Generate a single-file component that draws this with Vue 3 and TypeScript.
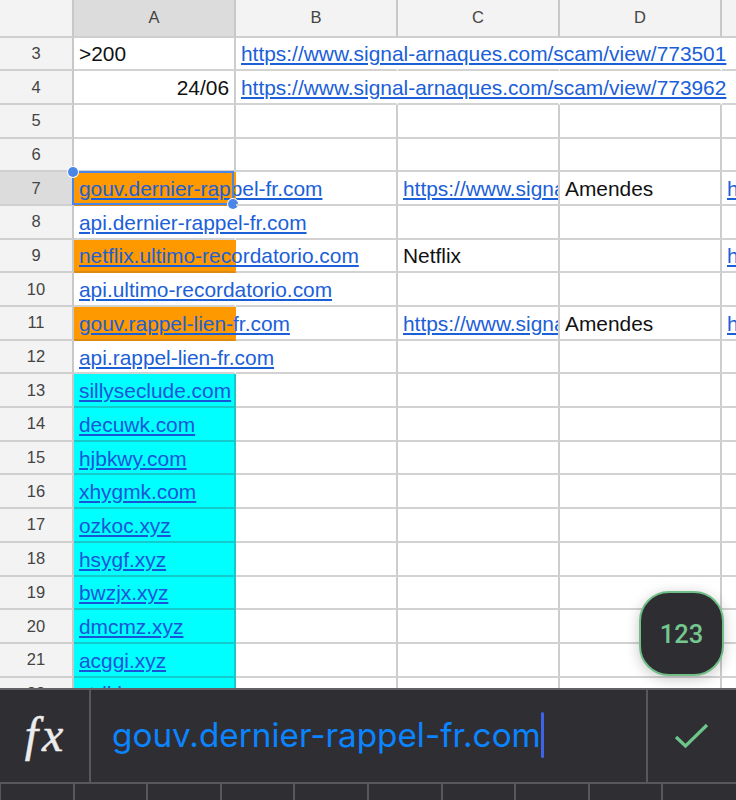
<script setup lang="ts">
interface Cell { text?: string; link?: boolean; right?: boolean; fill?: 'orange' | 'cyan'; open?: boolean; clip?: boolean; selected?: boolean }
interface Row { num: number; cells: Cell[]; active?: boolean }

const columns = ['A', 'B', 'C', 'D', '']
const base = 'https://www.signal-arnaques.com/scam/view/'
const short = 'https://www.signal-arnaques.com/scam/view/773000'

function blank(): Cell[] { return [{}, {}, {}, {}, {}] }

function domainRow(num: number, text: string, fill?: 'orange', c?: string, d?: string, e?: boolean, selected?: boolean, active?: boolean): Row {
  const cells = blank()
  cells[0] = { text, link: true, fill, open: true, selected }
  if (c === 'link') cells[2] = { text: short, link: true, clip: true }
  else if (c) cells[2] = { text: c, clip: true }
  if (d) cells[3] = { text: d, clip: true }
  if (e) cells[4] = { text: short, link: true, clip: true }
  return { num, cells, active }
}

function cyanRow(num: number, text: string): Row {
  const cells = blank()
  cells[0] = { text, link: true, fill: 'cyan' }
  return { num, cells }
}

const rows: Row[] = [
  { num: 3, cells: [{ text: '>200' }, { text: base + '773501', link: true, open: true }, { open: true }, { open: true }, {}] },
  { num: 4, cells: [{ text: '24/06', right: true }, { text: base + '773962', link: true, open: true }, { open: true }, { open: true }, {}] },
  { num: 5, cells: blank() },
  { num: 6, cells: blank() },
  domainRow(7, 'gouv.dernier-rappel-fr.com', 'orange', 'link', 'Amendes', true, true, true),
  domainRow(8, 'api.dernier-rappel-fr.com'),
  domainRow(9, 'netflix.ultimo-recordatorio.com', 'orange', 'Netflix', undefined, true),
  domainRow(10, 'api.ultimo-recordatorio.com'),
  domainRow(11, 'gouv.rappel-lien-fr.com', 'orange', 'link', 'Amendes', true),
  domainRow(12, 'api.rappel-lien-fr.com'),
  cyanRow(13, 'sillyseclude.com'),
  cyanRow(14, 'decuwk.com'),
  cyanRow(15, 'hjbkwy.com'),
  cyanRow(16, 'xhygmk.com'),
  cyanRow(17, 'ozkoc.xyz'),
  cyanRow(18, 'hsygf.xyz'),
  cyanRow(19, 'bwzjx.xyz'),
  cyanRow(20, 'dmcmz.xyz'),
  cyanRow(21, 'acggi.xyz'),
  cyanRow(22, 'ytdkl.xyz'),
]

const keys = Array.from({ length: 10 }, (_, i) => i)
</script>

<template>
  <div class="screen">
    <div class="sheet">
      <div class="grid">
        <div class="corner"></div>
        <div v-for="(col, i) in columns" :key="i" class="col-head" :class="{ on: col === 'A' }">{{ col }}</div>
        <template v-for="row in rows" :key="row.num">
          <div class="row-head" :class="{ on: row.active }">{{ row.num }}</div>
          <div
            v-for="(cell, i) in row.cells"
            :key="i"
            class="cell"
            :class="[
              cell.fill,
              {
                open: cell.open,
                clip: cell.clip,
                right: cell.right,
              },
            ]"
          >
            <span :class="{ link: cell.link }">{{ cell.text }}</span>
            <div v-if="cell.selected" class="selection">
              <i class="handle tl"></i>
              <i class="handle br"></i>
            </div>
          </div>
        </template>
      </div>
      <div class="fab">123</div>
    </div>

    <div class="formula">
      <div class="fx">fx</div>
      <div class="input"><span class="value">gouv.dernier-rappel-fr.com</span><i class="caret"></i></div>
      <div class="confirm">
        <svg width="36" height="26" viewBox="0 0 36 26" fill="none">
          <path d="M2 14 L11.500 23 L33 2" stroke="#6cc58a" stroke-width="3.200" />
        </svg>
      </div>
    </div>

    <div class="keys">
      <div v-for="k in keys" :key="k" class="key"></div>
    </div>
  </div>
</template>

<style>
html, body { margin: 0; background: #fff; }
</style>

<style scoped>
.screen {
  width: 736px;
  height: 800px;
  display: flex;
  flex-direction: column;
  overflow: hidden;
  font-family: "Liberation Sans", Arial, sans-serif;
}
.sheet {
  position: relative;
  height: 688px;
  flex: none;
  overflow: hidden;
  background: #fff;
}
.grid {
  display: grid;
  grid-template-columns: 74px repeat(5, 162px);
  grid-template-rows: 37.500px;
  grid-auto-rows: 33.700px;
  width: 884px;
}
.corner,
.col-head,
.row-head {
  box-sizing: border-box;
  display: flex;
  align-items: center;
  justify-content: center;
  background: #f3f3f3;
  color: #444;
  font-size: 16.500px;
  border-right: 2px solid #c8c8c8;
  border-bottom: 2px solid #cfcfcf;
}
.col-head.on,
.row-head.on { background: #dcdcdc; }
.cell {
  box-sizing: border-box;
  position: relative;
  display: flex;
  align-items: center;
  padding: 2px 0 0 5px;
  min-width: 0;
  white-space: nowrap;
  color: #111;
  font-size: 20.900px;
  border-right: 2px solid #cdcdcd;
  border-bottom: 2px solid #d2d2d2;
}
.cell.open { border-right-color: transparent; }
.cell.clip { overflow: hidden; }
.cell.right { justify-content: flex-end; padding: 2px 5px 0 0; }
.link { color: #1b60d8; text-decoration: underline; text-underline-offset: 2px; }
.cell.orange {
  background: #ff9900;
  border-bottom-color: #dd8a12;
}
.cell.cyan {
  background: #00ffff;
  border-right-color: #19c8c8;
  border-bottom-color: #14cbcb;
}
.cell.cyan .link { color: #1a55d8; }
.selection {
  position: absolute;
  inset: -1px 0 -1px -2px;
  border: 2px solid #4a86e8;
  pointer-events: none;
}
.handle {
  position: absolute;
  width: 10px;
  height: 10px;
  border-radius: 50%;
  background: #4a86e8;
  box-shadow: 0 0 0 1px #fff;
}
.handle.tl { left: -6px; top: -6px; }
.handle.br { right: -6px; bottom: -6px; }
.fab {
  position: absolute;
  left: 639px;
  top: 591px;
  box-sizing: border-box;
  width: 85px;
  height: 85px;
  display: flex;
  align-items: center;
  justify-content: center;
  border-radius: 30px;
  border: 2px solid #6fbf87;
  background: #2e2d32;
  color: #73c78f;
  font-family: Roboto, sans-serif;
  font-weight: 500;
  font-size: 25.500px;
  box-shadow: 0 3px 14px rgba(0, 0, 0, 0.22);
}
.formula {
  box-sizing: border-box;
  height: 96px;
  flex: none;
  display: flex;
  background: #2f2e33;
  border-top: 2px solid #626266;
  border-bottom: 2px solid #58585c;
}
.fx {
  box-sizing: border-box;
  width: 91px;
  flex: none;
  display: flex;
  align-items: center;
  justify-content: center;
  padding: 0 0 3px 3px;
  border-right: 2px solid #58585c;
  color: #ececec;
  font-family: "Liberation Serif", serif;
  font-style: italic;
  font-size: 48px;
  line-height: 1;
  letter-spacing: 4px;
  -webkit-text-stroke: 0.500px #ececec;
}
.input {
  flex: 1;
  display: flex;
  align-items: center;
  padding: 0 0 3px 21px;
  min-width: 0;
}
.value {
  color: #0a84ff;
  font-family: Inter, sans-serif;
  font-size: 33.300px;
  white-space: nowrap;
}
.caret {
  width: 3.500px;
  height: 46px;
  flex: none;
  background: #3d64e8;
  border-radius: 2px;
}
.confirm {
  box-sizing: border-box;
  width: 90px;
  flex: none;
  display: flex;
  align-items: center;
  justify-content: center;
  border-left: 2px solid #58585c;
}
.keys {
  flex: 1;
  display: grid;
  grid-template-columns: repeat(10, 1fr);
  background: #2f2e33;
}
.key {
  border-left: 2px solid #58585c;
  box-sizing: border-box;
  margin-left: -1px;
}
</style>
